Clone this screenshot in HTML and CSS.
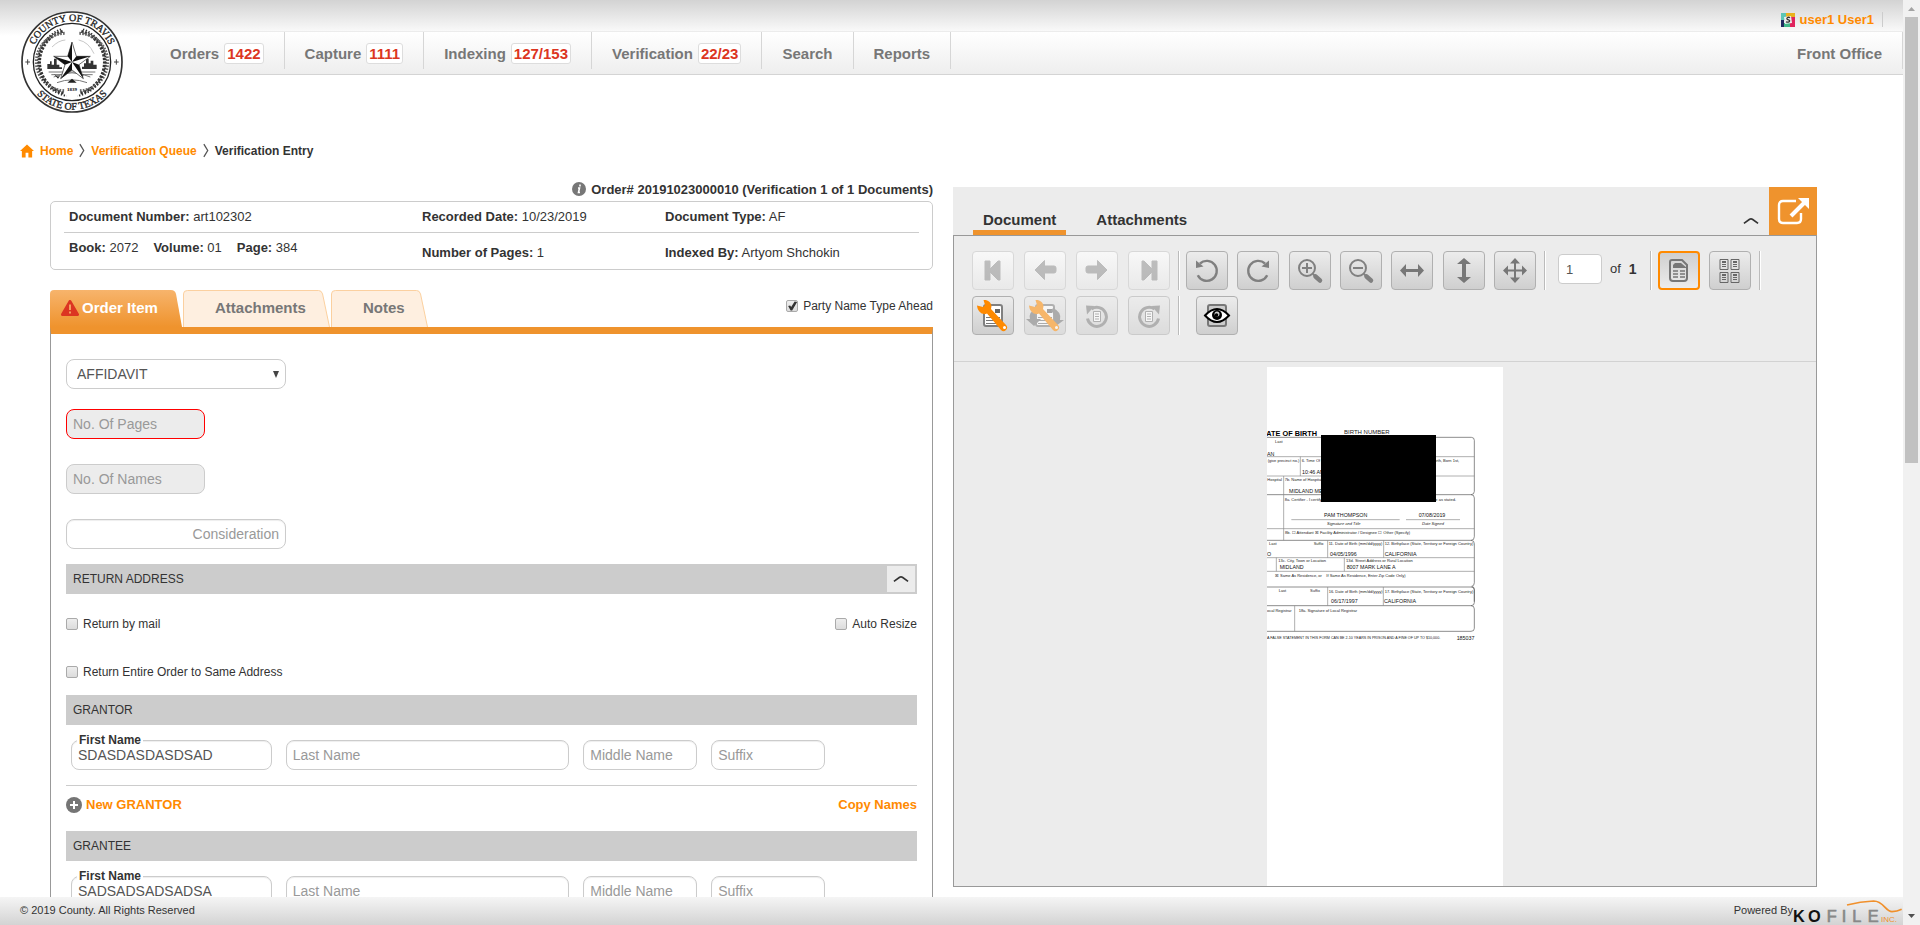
FILE: index.html
```html
<!DOCTYPE html>
<html lang="en">
<head>
<meta charset="utf-8">
<title>Verification Entry</title>
<link rel="stylesheet" href="styles.css">
</head>
<body>
<svg class="sprite" aria-hidden="true">
  <symbol id="i-first" viewBox="0 0 42 39"><path d="M13 10h5v8l8-8h2v19h-2l-8-8v8h-5z" fill="#999" stroke="#999" stroke-linejoin="round"/></symbol>
  <symbol id="i-prev" viewBox="0 0 42 39"><path d="M11 19 20.500 9.500V15H30a2 2 0 0 1 2 2v3a2 2 0 0 1-2 2h-9.500v6.500z" fill="#999" stroke="#999" stroke-linejoin="round"/></symbol>
  <symbol id="i-rotl" viewBox="0 0 42 39"><path d="M14 12.500a10 10 0 1 1-2.200 11.800" fill="none" stroke="#808080" stroke-width="2.400"/><path d="M10 9.500v7.500l7.500-1.500z" fill="#808080"/></symbol>
  <symbol id="i-lens" viewBox="0 0 42 39"><circle cx="18" cy="17" r="8" fill="none" stroke="#808080" stroke-width="2"/><path d="M24 23l2 2" stroke="#808080" stroke-width="2"/><path d="M26.500 25.500l4.500 4" stroke="#808080" stroke-width="4.500" stroke-linecap="round"/><path d="M13 17h10" stroke="#808080" stroke-width="2"/></symbol>
  <symbol id="i-width" viewBox="0 0 42 39"><path d="M9 19.500l6-6.500v5h12v-5l6 6.500-6 6.500v-5H15v5z" fill="#777"/></symbol>
  <symbol id="i-height" viewBox="0 0 42 39"><path d="M21 7l7 6h-5v13h5l-7 6-7-6h5V13h-5z" fill="#777"/></symbol>
  <symbol id="i-move" viewBox="0 0 42 39"><path d="M21 7l5 5.500h-4v6h6v-4l5 5-5 5v-4h-6v6h4L21 32l-5-5.500h4v-6h-6v4l-5-5 5-5v4h6v-6h-4z" fill="#777"/></symbol>
  <symbol id="i-sheet" viewBox="0 0 42 39"><path d="M14 9h10l5 5v13a3 3 0 0 1-3 3H15a3 3 0 0 1-3-3V11a2 2 0 0 1 2-2z" fill="none" stroke="#777" stroke-width="2"/><path d="M15 14l2-2h6l6 5H15z" fill="#777"/><path d="M15 20h5m2 0h5m-12 3h5m2 0h5m-12 3h5m2 0h5" stroke="#777" stroke-width="1.500"/></symbol>
  <symbol id="i-mini" viewBox="0 0 10 11"><path d="M1 .500h8v10H1z" fill="none" stroke="#666"/><path d="M3 3h4" stroke="#666" stroke-width="2"/><path d="M3 5.500h4M3 7.500h4" stroke="#666"/></symbol>
  <symbol id="i-page" viewBox="0 0 42 39"><rect x="12" y="9" width="18" height="21" rx="2" fill="#fff" stroke="#808080" stroke-width="2"/><path d="M23 13h5v4h-5z" fill="#666"/><path d="M14 21.500h14M14 24.500h14M14 27.500h14M16 18.500h5" stroke="#777" stroke-width="1"/></symbol>
  <symbol id="i-wrench" viewBox="0 0 42 39"><path d="M5 9.500l6 1.500 2-2-1.500-5c4-.500 7.500 2 8 6l-.500 3 15 16a3.500 3.500 0 0 1-5 5l-14-16.500c-5 2-9.500-2-10-8z" fill="#ff8a00"/><circle cx="32.500" cy="31.500" r="1.500" fill="#fff"/></symbol>
  <symbol id="i-pgrot" viewBox="0 0 42 39"><path d="M15.500 13a9.500 9.500 0 1 1-4 9.500" fill="none" stroke="#808080" stroke-width="3"/><path d="M10 9.500l1 9 7.500-8.500z" fill="#808080"/><path d="M17.500 15.500h7v10h-7z" fill="#fff" stroke="#808080"/><path d="M19 18h4m-4 2.500h4M19 23h4" stroke="#808080"/></symbol>
  <symbol id="i-up" viewBox="0 0 17 8"><path d="M1 6.500l6-4.300q1.500-.800 3 0l6 4.300" fill="none" stroke="#333" stroke-width="1.800"/></symbol>
  <symbol id="i-sep" viewBox="0 0 7 17"><path d="M1 1l4.500 7.500L1 16" fill="none" stroke="#555" stroke-width="1.500"/></symbol>
</svg>

<div class="page">
  <header class="header">
    <a class="seal" href="#" aria-label="County of Travis, State of Texas">
      <svg viewBox="-153 -153 306 306">
        <defs>
          <path id="arc-top" d="M-123 0A123 123 0 0 1 123 0"/>
          <path id="arc-bottom" d="M-143 0A143 143 0 0 0 143 0"/>
        </defs>
        <circle r="150" fill="#fff" stroke="#333" stroke-width="5"/>
        <circle r="116" fill="none" stroke="#222" stroke-width="4"/>
        <text class="seal-text"><textPath href="#arc-top" startOffset="50%">COUNTY OF TRAVIS</textPath></text>
        <text class="seal-text"><textPath href="#arc-bottom" startOffset="50%">STATE OF TEXAS</textPath></text>
        <path d="M-140 0h14m-7-8v16M126 0h14m-7-8v16" stroke="#444" stroke-width="3"/>
        <g fill="none" stroke="#333">
          <path d="M-28-92A96 96 0 0 0-22 94M28-92A96 96 0 0 1 22 94" stroke-width="9" stroke-dasharray="7 4"/>
          <path d="M-22-86A86 86 0 0 0-20 86M22-86A86 86 0 0 1 20 86" stroke-width="9" stroke-dasharray="5 4" stroke="#666"/>
          <path d="M-33-98A104 104 0 0 0-16 102M33-98A104 104 0 0 1 16 102" stroke-width="6" stroke-dasharray="4 5"/>
          <path d="M-60-45Q-40-65-20-66M20-66Q50-60 66-25" stroke="#aaa" stroke-width="2"/>
          <path d="M-55 45Q0 20 55 45M-45 62Q0 45 45 62M-70 30h140M-62 38h30m64 0h30" stroke="#777" stroke-width="3"/>
        </g>
        <path d="M-74 21V6h8v-8h5V8h7v-18h8V8h8v8h8v5zM30 21v-7h6V4h6v-14h8V4h6V-4h8v12h10v13z" fill="#333"/>
        <path d="M-54 36l12 8 8-6-8 12zM-14 62L0 50l14 12zM20 38h16l-6 6z" fill="#222"/>
        <path d="M0-60L13-17 55-17 21 8 34 50 0 24-34 50-21 8-55-17-13-17z" fill="#fff" stroke="#222" stroke-width="2"/>
        <path d="M0 0V-60L-13-17zM0 0L55-17H13zM0 0L34 50 21 8zM0 0L-34 50 0 24zM0 0L-55-17-21 8z" fill="#111"/>
        <text class="seal-year" x="0" y="86">1839</text>
      </svg>
    </a>
    <div class="header-main">
      <div class="userbar">
        <a class="user" href="#">
          <svg class="user-icon" viewBox="0 0 14 14"><path d="M0 0h5v7H0z" fill="#5cc5b5"/><path d="M5 0h9v4H5z" fill="#e9b21e"/><path d="M9 4h5v10H9z" fill="#e0245e"/><path d="M0 7h3v7H0z" fill="#222a60"/><path d="M3 10h6v4H3z" fill="#42b88a"/><path d="M3 4l7-1 1 7-7 1z" fill="#eee"/><path d="M9 4.700c-2-1-3.500 0-3 1.200s3 .600 2.700 2S6.500 9.500 5 8.700" fill="none" stroke="#333" stroke-width="1.300"/></svg>
          user1 User1</a>
      </div>
      <nav class="nav">
        <a href="#">Orders <span class="count">1422</span></a>
        <a href="#">Capture <span class="count">1111</span></a>
        <a href="#">Indexing <span class="count">127/153</span></a>
        <a href="#">Verification <span class="count">22/23</span></a>
        <a href="#">Search</a>
        <a href="#">Reports</a>
        <a class="nav-last" href="#">Front Office</a>
      </nav>
    </div>
  </header>

  <nav class="crumbs" aria-label="Breadcrumb">
    <svg class="home" viewBox="0 0 15 14"><path d="M7.500 0L15 7h-2v7H9V9H6v5H2V7H0z" fill="#ff8a00"/></svg>
    <a href="#">Home</a>
    <svg class="crumb-sep"><use href="#i-sep"/></svg>
    <a href="#">Verification Queue</a>
    <svg class="crumb-sep"><use href="#i-sep"/></svg>
    <span>Verification Entry</span>
  </nav>

  <main class="main">
    <section class="entry">
      <h1 class="order-title">
        <svg class="info" viewBox="0 0 14 14"><circle cx="7" cy="7" r="7" fill="#777"/><path d="M8 2.500v2M6 6h1.500L6.500 10.500H8" fill="none" stroke="#fff" stroke-width="1.600"/></svg>
        Order# 20191023000010 (Verification 1 of 1 Documents)
      </h1>
      <div class="summary">
        <div class="summary-row">
          <div><b>Document Number:</b> art102302</div>
          <div><b>Recorded Date:</b> 10/23/2019</div>
          <div><b>Document Type:</b> AF</div>
        </div>
        <div class="summary-row summary-low">
          <div class="volume"><span><b>Book:</b> 2072</span><span><b>Volume:</b> 01</span><span><b>Page:</b> 384</span></div>
          <div><b>Number of Pages:</b> 1</div>
          <div><b>Indexed By:</b> Artyom Shchokin</div>
        </div>
      </div>

      <div class="tabbar">
        <button class="tab tab-order" type="button">
          <svg class="tab-shape" viewBox="0 0 132 38" preserveAspectRatio="none"><defs><linearGradient id="tab-fill" x1="0" y1="0" x2="0" y2="1"><stop offset="0" stop-color="#f7b46c"/><stop offset="1" stop-color="#ef932d"/></linearGradient></defs><path d="M0 38V4q0-4 4-4h117q4 0 5 4l6 34z" fill="url(#tab-fill)"/></svg>
          <svg class="warn" viewBox="0 0 18 16"><path d="M9 1.500L16.500 14.500H1.500z" fill="#dc3522" stroke="#dc3522" stroke-width="3" stroke-linejoin="round"/><path d="M9 4.500v5.500M9 11.500v2" stroke="#f2a060" stroke-width="2"/></svg>
          <span>Order Item</span>
        </button>
        <button class="tab tab-attach" type="button">
          <svg class="tab-shape" viewBox="0 0 148 38" preserveAspectRatio="none"><path d="M.500 38V4q0-3.500 4-3.500h132q3 0 4 3.500l7 34" fill="#feefe0" stroke="#fbcf9d"/></svg>
          <span>Attachments</span>
        </button>
        <button class="tab tab-notes" type="button">
          <svg class="tab-shape" viewBox="0 0 97 38" preserveAspectRatio="none"><path d="M.500 38V4q0-3.500 4-3.500h81q3 0 4 3.500l7 34" fill="#feefe0" stroke="#fbcf9d"/></svg>
          <span>Notes</span>
        </button>
        <label class="check type-ahead"><input type="checkbox" checked>Party Name Type Ahead</label>
      </div>

      <form class="form">
        <div class="select-wrap">
          <select class="field wide" aria-label="Document type"><option>AFFIDAVIT</option></select>
          <svg class="caret" viewBox="0 0 6 7"><path d="M0 0h6L3 7z" fill="#444"/></svg>
        </div>
        <input class="field short locked invalid" placeholder="No. Of Pages" aria-label="No. Of Pages" readonly>
        <input class="field short locked" placeholder="No. Of Names" aria-label="No. Of Names" readonly>
        <input class="field wide amount" placeholder="Consideration" aria-label="Consideration">

        <h2 class="band">RETURN ADDRESS <button class="fold" type="button" aria-label="Collapse"><svg><use href="#i-up"/></svg></button></h2>
        <div class="options">
          <label class="check"><input type="checkbox">Return by mail</label>
          <label class="check"><input type="checkbox">Auto Resize</label>
        </div>
        <label class="check same"><input type="checkbox">Return Entire Order to Same Address</label>

        <h2 class="band">GRANTOR</h2>
        <div class="names">
          <div class="named"><label for="grantor-first">First Name</label><input class="field" id="grantor-first" value="SDASDASDASDSAD"></div>
          <input class="field" placeholder="Last Name" aria-label="Last Name">
          <input class="field" placeholder="Middle Name" aria-label="Middle Name">
          <input class="field" placeholder="Suffix" aria-label="Suffix">
        </div>
        <div class="actions">
          <a href="#"><svg class="plus" viewBox="0 0 16 16"><circle cx="8" cy="8" r="8" fill="#757575"/><path d="M4 8h8M8 4v8" stroke="#fff" stroke-width="2"/></svg>New GRANTOR</a>
          <a href="#">Copy Names</a>
        </div>

        <h2 class="band">GRANTEE</h2>
        <div class="names">
          <div class="named"><label for="grantee-first">First Name</label><input class="field" id="grantee-first" value="SADSADSADSADSA"></div>
          <input class="field" placeholder="Last Name" aria-label="Last Name">
          <input class="field" placeholder="Middle Name" aria-label="Middle Name">
          <input class="field" placeholder="Suffix" aria-label="Suffix">
        </div>
      </form>
    </section>

    <section class="viewer">
      <div class="viewer-head">
        <button class="vtab vtab-on" type="button">Document</button>
        <button class="vtab" type="button">Attachments</button>
        <button class="collapse" type="button" aria-label="Collapse"><svg><use href="#i-up"/></svg></button>
        <button class="popout" type="button" aria-label="Open in new window">
          <svg viewBox="0 0 48 48"><path d="M27 14H14q-4 0-4 4v14q0 4 4 4h14q4 0 4-4v-6" fill="none" stroke="#fff" stroke-width="2.400"/><path d="M22 29L35 16" stroke="#fff" stroke-width="4"/><path d="M29 11h11v11z" fill="#fff"/></svg>
        </button>
      </div>
      <div class="viewer-body">
        <div class="toolbar">
          <div class="tools">
            <div class="group four">
              <button class="tool off" disabled type="button" aria-label="First page"><svg><use href="#i-first"/></svg></button>
              <button class="tool off" disabled type="button" aria-label="Previous page"><svg><use href="#i-prev"/></svg></button>
              <button class="tool off" disabled type="button" aria-label="Next page"><svg class="mirror"><use href="#i-prev"/></svg></button>
              <button class="tool off" disabled type="button" aria-label="Last page"><svg class="mirror"><use href="#i-first"/></svg></button>
            </div>
            <i class="rule"></i>
            <div class="group seven">
              <button class="tool" type="button" aria-label="Rotate left"><svg><use href="#i-rotl"/></svg></button>
              <button class="tool" type="button" aria-label="Rotate right"><svg class="mirror"><use href="#i-rotl"/></svg></button>
              <button class="tool" type="button" aria-label="Zoom in"><svg viewBox="0 0 42 39"><use href="#i-lens"/><path d="M18 12v10" stroke="#808080" stroke-width="2"/></svg></button>
              <button class="tool" type="button" aria-label="Zoom out"><svg><use href="#i-lens"/></svg></button>
              <button class="tool" type="button" aria-label="Fit width"><svg><use href="#i-width"/></svg></button>
              <button class="tool" type="button" aria-label="Fit height"><svg><use href="#i-height"/></svg></button>
              <button class="tool" type="button" aria-label="Pan"><svg><use href="#i-move"/></svg></button>
            </div>
            <i class="rule"></i>
            <div class="pager"><input class="page-no" value="1" aria-label="Page"><span>of</span><b>1</b></div>
            <i class="rule"></i>
            <div class="group two">
              <button class="tool on" type="button" aria-label="Single page"><svg><use href="#i-sheet"/></svg></button>
              <button class="tool" type="button" aria-label="Thumbnails"><svg viewBox="0 0 42 39"><use href="#i-mini" x="10" y="8" width="10" height="11"/><use href="#i-mini" x="21" y="8" width="10" height="11"/><use href="#i-mini" x="10" y="21" width="10" height="11"/><use href="#i-mini" x="21" y="21" width="10" height="11"/></svg></button>
            </div>
            <i class="rule"></i>
          </div>
          <div class="tools">
            <div class="group four">
              <button class="tool" type="button" aria-label="Edit page"><svg viewBox="0 0 42 39"><use href="#i-page"/><use href="#i-wrench"/></svg></button>
              <button class="tool dim" disabled type="button" aria-label="Restore page"><svg viewBox="0 0 42 39"><use href="#i-page"/><path d="M13 12Q4 16 6 23H2l8 7 7-7h-5q-2-5 1-8zM29 12q9 4 7 12h4l-8 6-7-6h5q1-6-3-9z" fill="#777"/><use href="#i-wrench"/></svg></button>
              <button class="tool dim" disabled type="button" aria-label="Rotate page left"><svg><use href="#i-pgrot"/></svg></button>
              <button class="tool dim" disabled type="button" aria-label="Rotate page right"><svg class="mirror"><use href="#i-pgrot"/></svg></button>
            </div>
            <i class="rule"></i>
            <button class="tool look" type="button" aria-label="View redactions"><svg viewBox="0 0 42 39"><rect x="12" y="9" width="18" height="21" rx="2" fill="#ccc" stroke="#777" stroke-width="2"/><path d="M9 19.500Q21 6.500 33 19.500 21 32.500 9 19.500z" fill="#fff" stroke="#000" stroke-width="2"/><circle cx="21" cy="19" r="5" fill="#000"/><circle cx="21" cy="18" r="2.500" fill="#ccc"/><circle cx="20.500" cy="19" r="1.800" fill="#000"/></svg></button>
          </div>
        </div>
        <div class="canvas">
          <svg class="scan" viewBox="36 21 708 1560">
            <path d="M36 21h708v1560H36z" fill="#fff"/>
            <g fill="none" stroke="#555" stroke-width="2">
              <path d="M36 232h613q9 0 9 9v153q0 10-10 10H36m612 0q10 0 10 10v116q0 11-10 11H36m612 0q10 0 10 10v117q0 10-8 11 8 1 8 9v37M36 681h612q10 0 10 9v38q0 9-10 9H36m612 0q10 0 10 10v58q0 9-10 9H36"/>
              <path d="M36 290h622M36 348h622M136 290v58M86 348v193M36 506h622M218 541v52M386 541v52M36 593h622M64 593v41M268 593v41M36 634h622M218 681v56M385 681v56M119 737v77M109 479h325M453 479h162" stroke="#888"/>
            </g>
            <g class="scan-text">
              <text class="scan-title" x="34" y="227">ATE OF BIRTH</text>
              <text class="scan-head" x="267" y="223">BIRTH NUMBER</text>
              <text x="60" y="249">Last</text><text class="scan-value" x="36" y="287">AN</text>
              <text x="38" y="306">(give precinct no.)</text><text x="140" y="306">6. Time Of Birth</text><text x="541" y="306">irth, Born 1st,</text>
              <text class="scan-value" x="141" y="342">10:46 AM</text>
              <text x="37" y="363">Hospital</text><text x="89" y="363">7b. Name of Hospital</text>
              <text class="scan-value" x="102" y="399">MIDLAND MEM</text>
              <text x="89" y="423">8a. Certifier - I certify that</text><text x="541" y="423">e as stated.</text>
              <text class="scan-value" x="207" y="471">PAM THOMPSON</text><text class="scan-value" x="491" y="471">07/08/2019</text>
              <text class="scan-italic" x="216" y="495">Signature and Title</text><text class="scan-italic" x="501" y="495">Date Signed</text>
              <text x="90" y="523">8b. ☐ Attendant ☒ Facility Administrator / Designee ☐ Other (Specify)</text>
              <text x="42" y="554">Last</text><text x="176" y="554">Suffix</text><text x="221" y="555">11. Date of Birth (mm/dd/yyyy)</text><text x="389" y="555">12. Birthplace (State, Territory or Foreign Country)</text>
              <text class="scan-value" x="36" y="588">O</text><text class="scan-value" x="225" y="587">04/05/1996</text><text class="scan-value" x="389" y="587">CALIFORNIA</text>
              <text x="70" y="607">13c. City, Town or Location</text><text x="273" y="607">13d. Street Address or Rural Location</text>
              <text class="scan-value" x="74" y="628">MIDLAND</text><text class="scan-value" x="275" y="628">8007 MARK LANE A</text>
              <text x="60" y="650">☒ Same As Residence, or</text><text x="214" y="650">If Same As Residence, Enter Zip Code Only)</text>
              <text x="71" y="696">Last</text><text x="165" y="696">Suffix</text><text x="221" y="699">16. Date of Birth (mm/dd/yyyy)</text><text x="389" y="699">17. Birthplace (State, Territory or Foreign Country)</text>
              <text class="scan-value" x="228" y="730">06/17/1997</text><text class="scan-value" x="387" y="730">CALIFORNIA</text>
              <text x="36" y="756">ocal Registrar</text><text x="131" y="756">18a. Signature of Local Registrar</text>
              <text class="scan-fine" x="36" y="836">A FALSE STATEMENT IN THIS FORM CAN BE 2-10 YEARS IN PRISON AND A FINE OF UP TO $10,000.</text>
              <text class="scan-value" x="605" y="840">185037</text>
            </g>
            <path d="M198 225h345v201H198z"/>
          </svg>
        </div>
      </div>
    </section>
  </main>

  <footer class="footer">
    <span>© 2019 County. All Rights Reserved</span>
    <a class="powered" href="#">Powered By
      <svg class="kofile" viewBox="398 174 330 78" aria-label="Kofile Inc.">
        <path d="M560 195Q600 184 640 183c30 0 35 32 55 32q15 0 29-7" fill="none" stroke="#f0902c" stroke-width="5"/>
        <text class="k-dark" x="398 443" y="246">KO</text>
        <text class="k-gray" x="499 544 576 622" y="246">FILE</text>
        <text class="k-inc" x="662" y="246">INC.</text>
      </svg>
    </a>
  </footer>
</div>

<div class="scroll" aria-hidden="true">
  <svg viewBox="0 0 17 17"><path d="M5 11l3.500-4L12 11z" fill="#a3a3a3"/></svg>
  <div class="thumb-track"><div class="thumb"></div></div>
  <svg viewBox="0 0 17 17"><path d="M5 6l3.500 4L12 6z" fill="#505050"/></svg>
</div>
</body>
</html>
```
FILE: styles.css
```css
* { box-sizing: border-box; }

body {
  margin: 0;
  display: flex;
  height: 100vh;
  overflow: hidden;
  background: #fff;
  color: #333;
  font: 13px/16px "Liberation Sans", Arial, sans-serif;
}

a { color: #ff8a00; font-weight: bold; text-decoration: none; }
button, input, select { margin: 0; font-family: inherit; }
button { border: 0; padding: 0; background: none; color: inherit; cursor: pointer; }
svg { display: block; flex: none; }
.sprite { position: absolute; width: 0; height: 0; }

.page { flex: 1; min-width: 0; display: flex; flex-direction: column; }

/* Header */
.header {
  display: flex;
  flex: none;
  height: 137px;
  background: linear-gradient(#d3d3d3, #fff 36px);
}
.seal { flex: none; width: 150px; padding: 11px 0 0 21px; }
.seal svg { width: 102px; height: 102px; }
.seal-text { font: 30px "Liberation Serif", serif; text-anchor: middle; fill: #222; stroke: #222; }
.seal-year { font: bold 15px "Liberation Serif", serif; text-anchor: middle; }
.header-main { flex: 1; min-width: 0; }
.userbar { display: flex; justify-content: flex-end; height: 31px; padding: 12px 20px 0 0; }
.user { display: flex; align-items: center; gap: 5px; height: 15px; padding-right: 8px; border-right: 1px solid #ccc; }
.user-icon { width: 14px; height: 14px; }
.nav {
  display: flex;
  height: 44px;
  padding-bottom: 5px;
  border-top: 1px solid #ececec;
  border-bottom: 1px solid #d4d4d4;
  background: linear-gradient(#fff, #eee);
}
.nav a {
  display: flex;
  align-items: center;
  gap: 5px;
  padding: 6px 20px 0;
  border-right: 1px solid #d6d6d6;
  color: #777;
  font-size: 15px;
}
.nav .nav-last { margin-left: auto; }
.count { padding: 1px 2px; border: 1px solid #ddd; border-radius: 3px; background: #fff; color: #dc3522; line-height: 17px; }

.crumbs { display: flex; flex: none; align-items: center; gap: 6px; height: 44px; padding: 0 20px 17px; font-size: 12px; font-weight: bold; }
.home { width: 14px; height: 14px; }
.crumb-sep { width: 6px; height: 17px; }

/* Two columns */
.main {
  flex: 1;
  min-height: 0;
  display: grid;
  grid-template-columns: 883fr 864fr;
  grid-template-rows: minmax(0, 1fr);
  gap: 20px;
  padding: 0 86px 0 50px;
}
.entry { min-width: 0; overflow: hidden; }
.order-title { display: flex; justify-content: flex-end; gap: 5px; height: 20px; margin: 0; font-size: 13px; line-height: 18px; }
.info { width: 14px; height: 14px; margin-top: 1px; }

.summary { padding: 0 13px; border: 1px solid #ccc; border-radius: 5px; }
.summary-row { display: grid; grid-template-columns: 353fr 243fr 259fr; line-height: 30px; }
.summary-row > div { padding-left: 5px; }
.summary-low { height: 37px; border-top: 1px solid #ccc; line-height: 40px; }
.volume { display: flex; gap: 15px; line-height: 30px; }

.tabbar { display: flex; align-items: flex-end; gap: 1px; height: 57px; }
.tab { position: relative; display: flex; align-items: center; height: 37px; padding-bottom: 2px; color: #777; font-size: 15px; font-weight: bold; }
.tab span, .warn { position: relative; }
.tab-shape { position: absolute; inset: 0; width: 100%; height: 100%; }
.tab-order { width: 132px; padding-left: 11px; gap: 3px; color: #fff; }
.tab-attach { width: 147px; padding-left: 32px; }
.tab-notes { width: 97px; padding-left: 32px; }
.warn { width: 18px; height: 16px; }
.type-ahead { margin: 0 0 13px auto; }

.check { display: flex; align-items: center; gap: 5px; font-size: 12px; }
.check input {
  appearance: none;
  width: 12px;
  height: 12px;
  border: 1px solid #aaa;
  border-radius: 2px;
  background: linear-gradient(#eee, #dcdcdc);
}
.check input:checked::before {
  content: "";
  display: block;
  width: 10px;
  height: 10px;
  background: #333;
  clip-path: polygon(10% 50%, 30% 45%, 40% 60%, 75% 5%, 100% 10%, 50% 95%, 35% 95%);
}

/* Form */
.form {
  display: flex;
  flex-direction: column;
  align-items: flex-start;
  padding: 25px 15px 40px;
  border: 1px solid #999;
  border-top: 7px solid #ef932d;
}
.field {
  width: 100%;
  height: 30px;
  padding: 0 6px;
  border: 1px solid #ccc;
  border-radius: 8px;
  background: #fff;
  box-shadow: inset 0 1px 1px #eee;
  color: #555;
  font-size: 14px;
}
.field::placeholder { color: #999; opacity: 1; }
.wide { width: 220px; }
.short { width: 139px; margin-bottom: 25px; }
.locked { background: #ececec; }
.invalid { border-color: #f00; }
.amount { margin-bottom: 15px; text-align: right; }
.select-wrap { position: relative; margin-bottom: 20px; }
.select-wrap .field { appearance: none; padding-left: 10px; box-shadow: none; }
.caret { position: absolute; top: 12px; right: 7px; width: 6px; height: 7px; }

.band {
  display: flex;
  justify-content: space-between;
  align-items: center;
  width: 100%;
  height: 30px;
  margin: 0;
  padding: 0 2px 0 7px;
  background: #ccc;
  font-size: 12px;
  font-weight: normal;
}
.fold { width: 28px; height: 26px; padding-left: 6px; background: #ececec; }
.fold svg, .collapse svg { width: 16px; height: 8px; }
.options { display: flex; justify-content: space-between; width: 100%; padding: 22px 0 32px; }
.same { margin-bottom: 15px; }
.names {
  display: grid;
  grid-template-columns: 201fr 284fr 114fr 114fr;
  gap: 14px;
  width: 100%;
  padding: 15px 92px 15px 5px;
  border-bottom: 1px solid #ccc;
}
.named { position: relative; }
.named label { position: absolute; top: -8px; left: 6px; padding: 0 2px; background: #fff; font-size: 12px; font-weight: bold; }
.actions { display: flex; justify-content: space-between; width: 100%; padding: 11px 0 18px; }
.actions a { display: flex; align-items: center; gap: 4px; }
.plus { width: 16px; height: 16px; }

/* Document viewer */
.viewer { min-width: 0; display: flex; flex-direction: column; padding: 6px 0 10px; }
.viewer-head { display: flex; flex: none; height: 48px; padding-left: 20px; background: #ececec; }
.vtab { padding: 21px 10px 0; border-bottom: 5px solid transparent; font-size: 15px; font-weight: bold; margin-right: 20px; }
.vtab-on { border-bottom-color: #ef932d; }
.collapse { margin-left: auto; padding: 20px 10px 0; }
.popout { width: 48px; background: #ef932d; }
.viewer-body { flex: 1; min-height: 0; display: flex; flex-direction: column; border: 1px solid #999; background: #ececec; }
.toolbar { flex: none; padding: 15px 18px 26px; border-bottom: 1px solid #d2d2d2; }
.tools { display: flex; gap: 8px; height: 39px; }
.tools + .tools { margin-top: 6px; }
.group { display: flex; justify-content: space-between; }
.four { width: 198px; }
.seven { width: 350px; }
.two { width: 93px; }
.tool {
  width: 42px;
  height: 39px;
  border: 1px solid #b0b0b0;
  border-radius: 4px;
  background: linear-gradient(#ececec, #cfcfcf);
}
.tool svg { width: 42px; height: 39px; margin: -1px; }
.tool .mirror { transform: scaleX(-1); }
.tool.off { border-color: #d8d8d8; background: linear-gradient(#f8f8f8, #e9e9e9); }
.off svg { opacity: .6; }
.tool.dim { opacity: .55; }
.tool.on { border: 2px solid #ff8a00; background: linear-gradient(#cfcfcf, #ececec); }
.tool.on svg { margin: -2px; }
.look { margin-left: 10px; }
.rule { width: 2px; margin-right: -2px; border-left: 1px solid #bbb; border-right: 1px solid #fff; }
.pager { display: flex; align-items: center; gap: 8px; width: 90px; padding: 0 0 3px 6px; font-size: 13px; }
.page-no { width: 44px; height: 30px; padding: 0 7px; border: 1px solid #ccc; border-radius: 4px; color: #555; font-size: 13px; }
.pager b { font-size: 14px; }
.canvas { flex: 1; min-height: 0; overflow: hidden; padding-top: 5px; }
.scan { width: 236px; height: 520px; margin: 0 auto; }
.scan-text { font-size: 12px; fill: #222; }
.scan-title { font-size: 22px; font-weight: bold; fill: #000; }
.scan-head { font-size: 18px; }
.scan-value { font-size: 16px; fill: #111; }
.scan-italic { font-style: italic; }
.scan-fine { font-size: 11px; }

/* Footer */
.footer {
  display: flex;
  flex: none;
  justify-content: space-between;
  height: 28px;
  padding-left: 20px;
  background: linear-gradient(#f5f5f5, #d3d3d3);
  font-size: 11px;
  line-height: 26px;
}
.powered { display: flex; color: #333; font-weight: normal; }
.kofile { width: 110px; height: 26px; margin-top: 1px; }
.k-dark, .k-gray { font: bold 49px "Liberation Sans", Arial, sans-serif; fill: #111; }
.k-gray { font-weight: normal; fill: #888; stroke: #888; stroke-width: 2; }
.k-inc { font: 24px "Liberation Sans", Arial, sans-serif; fill: #f0902c; }

/* Page scroll bar */
.scroll { display: flex; flex: none; flex-direction: column; width: 17px; background: #f1f1f1; }
.scroll svg { width: 17px; height: 17px; }
.thumb-track { flex: 1; padding: 0 2px; }
.thumb { height: 50%; background: #c1c1c1; }
```
